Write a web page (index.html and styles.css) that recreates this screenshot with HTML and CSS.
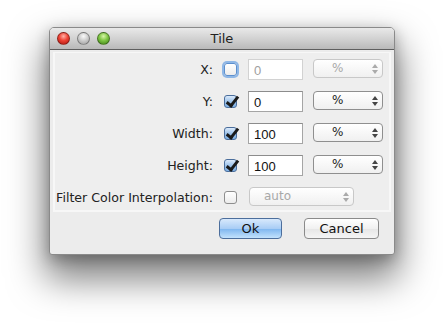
FILE: index.html
```html
<!DOCTYPE html>
<html lang="en">
<head>
  <meta charset="UTF-8">
  <title>Tile</title>
  <link rel="stylesheet" href="styles.css">
</head>
<body>
  <div class="window">
    <div class="titlebar">
      <div class="lights">
        <span class="light red"></span>
        <span class="light gray"></span>
        <span class="light green"></span>
      </div>
      <div class="title">Tile</div>
    </div>

    <div class="panel">
      <div class="form-grid">
        <!-- X -->
        <label class="label">X:</label>
        <span class="check focus"></span>
        <span class="field disabled">0</span>
        <span class="select disabled">%<i class="arrows"></i></span>

        <!-- Y -->
        <label class="label">Y:</label>
        <span class="check checked"></span>
        <span class="field">0</span>
        <span class="select">%<i class="arrows"></i></span>

        <!-- Width -->
        <label class="label">Width:</label>
        <span class="check checked"></span>
        <span class="field">100</span>
        <span class="select">%<i class="arrows"></i></span>

        <!-- Height -->
        <label class="label">Height:</label>
        <span class="check checked"></span>
        <span class="field">100</span>
        <span class="select">%<i class="arrows"></i></span>

        <!-- Filter -->
        <label class="label">Filter Color Interpolation:</label>
        <span class="check"></span>
        <span class="select wide disabled">auto<i class="arrows"></i></span>
      </div>
    </div>

    <div class="buttons">
      <button class="btn default">Ok</button>
      <button class="btn">Cancel</button>
    </div>
  </div>
</body>
</html>
```

FILE: styles.css
```css
html {
  height: 100%;
  background: #ffffff;
}

body {
  margin: 0;
  min-height: 100%;
  box-sizing: border-box;
  padding: 27px 0 0 49px;
  font-family: 'DejaVu Sans', sans-serif;
  font-size: 12.6px;
  color: #222;
}

.window {
  width: 346px;
  height: 228px;
  box-sizing: border-box;
  background: #ececec;
  border: 1px solid #8a8a8a;
  border-radius: 5px 5px 3px 3px;
  box-shadow: 0 20px 36px 4px rgba(0, 0, 0, 0.5), 0 4px 14px rgba(0, 0, 0, 0.25);
  display: flex;
  flex-direction: column;
}

.titlebar {
  height: 21px;
  border-bottom: 1px solid #5e5e5e;
  border-radius: 4px 4px 0 0;
  background: linear-gradient(to bottom, #e9e9e9, #d2d2d2 50%, #b9b9b9);
  position: relative;
  display: flex;
  align-items: center;
  justify-content: center;
}

.lights {
  position: absolute;
  left: 7px;
  top: 4px;
  display: flex;
  gap: 7px;
}

.light {
  width: 13px;
  height: 13px;
  border-radius: 50%;
  box-sizing: border-box;
  border: 1px solid rgba(0, 0, 0, 0.35);
}

.light.red {
  background: radial-gradient(circle at 50% 30%, #ffb3a8 0, #ef4335 45%, #a8140d 100%);
}

.light.gray {
  background: radial-gradient(circle at 50% 30%, #fafafa 0, #cfcfcf 45%, #9a9a9a 100%);
}

.light.green {
  background: radial-gradient(circle at 50% 30%, #d8f5a8 0, #7fc644 45%, #3b7c12 100%);
}

.title {
  font-size: 13px;
  color: #222;
}

.panel {
  margin: 2px 3px 0 3px;
  background: #eeeeee;
  border: 2px solid #f7f7f7;
  border-top: 1px solid #f7f7f7;
  height: 160px;
  padding-top: 6px;
  box-sizing: border-box;
}

.form-grid {
  display: grid;
  grid-template-columns: 159px 14px 55px 70px;
  grid-auto-rows: 21px;
  column-gap: 10px;
  row-gap: 11px;
  align-items: center;
}

.label {
  text-align: right;
  white-space: nowrap;
  margin-right: 1px;
}

.check {
  width: 13px;
  height: 13px;
  box-sizing: border-box;
  border: 1px solid #8e8e8e;
  border-radius: 3px;
  background: linear-gradient(to bottom, #ffffff, #ececec);
  position: relative;
}

.check.focus {
  border-color: #5c8fce;
  box-shadow: 0 0 0 2px #8fb7e6;
}

.check.checked {
  border-color: #4b6e9c;
  background: linear-gradient(to bottom, #dbeafb, #9ec3ea 50%, #7fb0e4);
}

.check.checked::after {
  content: '';
  position: absolute;
  left: 4px;
  top: -2px;
  width: 4px;
  height: 10px;
  border: solid #1a1a1a;
  border-width: 0 3px 3px 0;
  transform: rotate(38deg);
}

.field {
  height: 21px;
  box-sizing: border-box;
  background: #fff;
  border: 1px solid #a5a5a5;
  border-top-color: #8c8c8c;
  padding: 2px 5px 0;
  font-family: 'Liberation Sans', sans-serif;
  font-size: 13px;
  line-height: 17px;
  color: #111;
}

.field.disabled {
  border-color: #d2d2d2;
  color: #a0a0a0;
}

.select {
  height: 19px;
  box-sizing: border-box;
  border: 1px solid #8f8f8f;
  border-radius: 4px;
  background: linear-gradient(to bottom, #ffffff, #f0f0f0);
  font-size: 12px;
  line-height: 17px;
  padding-left: 18px;
  position: relative;
  color: #222;
  margin-top: -2px;
}

.select.disabled {
  border-color: #c8c8c8;
  color: #a8a8a8;
}

.select.wide {
  grid-column: 3 / span 2;
  width: 105px;
  margin-left: 1px;
  padding-left: 14px;
}

.arrows {
  position: absolute;
  right: 7px;
  top: 4px;
  width: 0;
  height: 0;
}

.arrows::before,
.arrows::after {
  content: '';
  position: absolute;
  left: -3px;
  border-left: 3px solid transparent;
  border-right: 3px solid transparent;
}

.arrows::before {
  top: 0;
  border-bottom: 4px solid #444;
}

.arrows::after {
  top: 6px;
  border-top: 4px solid #444;
}

.select.disabled .arrows::before {
  border-bottom-color: #aaa;
}

.select.disabled .arrows::after {
  border-top-color: #aaa;
}

.buttons {
  display: flex;
  justify-content: flex-end;
  gap: 22px;
  padding: 6px 15px 0 0;
}

.btn {
  height: 21px;
  box-sizing: border-box;
  border: 1px solid #8a8a8a;
  border-radius: 4px;
  background: linear-gradient(to bottom, #ffffff, #f1f1f1 50%, #e6e6e6 51%, #f5f5f5);
  font-family: 'DejaVu Sans', sans-serif;
  font-size: 13px;
  color: #111;
  width: 75px;
  padding: 0;
}

.btn.default {
  width: 63px;
  border-color: #4c6e9c;
  background: linear-gradient(to bottom, #d8e9fc, #a9cdf5 50%, #7db5ef 51%, #c3e2fd);
}
```
